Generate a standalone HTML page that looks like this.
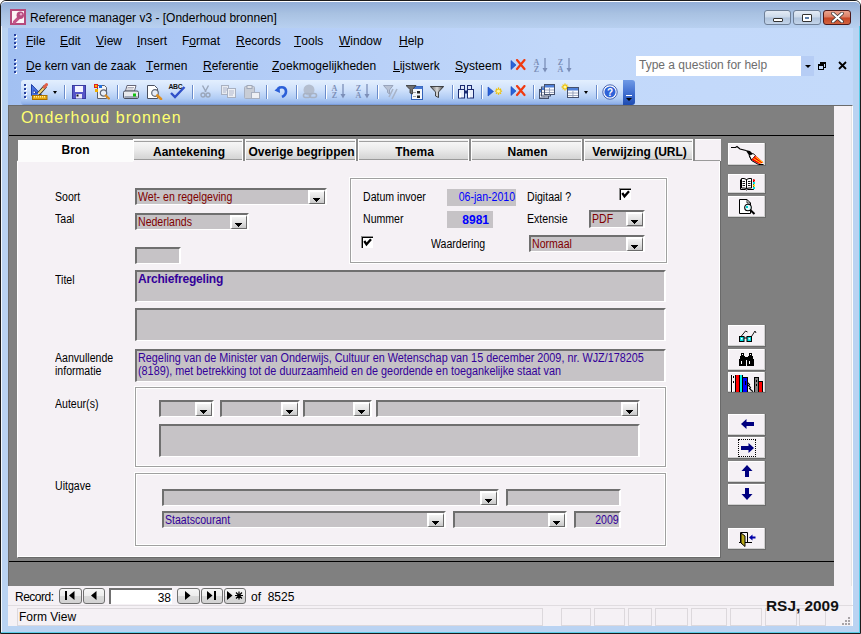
<!DOCTYPE html><html><head><meta charset="utf-8"><style>
*{box-sizing:border-box;margin:0;padding:0}
html,body{width:861px;height:634px;overflow:hidden;background:#fff}
body{position:relative;font-family:"Liberation Sans",sans-serif;font-size:12px;color:#000}
.a{position:absolute}
.nw{white-space:nowrap}
.mn{position:absolute;font-size:12px;white-space:nowrap;line-height:14px}
.mn u{text-decoration:none;position:relative}.mn u:after{content:'';position:absolute;left:0;right:0;top:12px;height:1px;background:#000}
.lb{position:absolute;font-size:12px;white-space:nowrap;line-height:13px;transform:scaleX(0.88);transform-origin:0 0}
.lbr{transform-origin:100% 0}
.tb{position:absolute;background:#C6C3C6;border-top:2px solid #6F6F6F;border-left:2px solid #6F6F6F;border-bottom:1px solid #fff;border-right:2px solid #fff}
.dd{position:absolute;top:0;right:0;width:17px;height:14px;background:linear-gradient(#F4F4F4,#E4E4E4 45%,#C8C8C8);border-top:2px solid #fff;border-left:2px solid #fff;border-right:1px solid #6A6A6A;border-bottom:1px solid #6A6A6A}
.dd i{position:absolute;height:1px;background:#000}
.grp{position:absolute;border:1px solid #A0A0A0;box-shadow:0 0 0 1px #fff, inset 0 0 0 1px #fff}
.btn{position:absolute;background:#F5F1F5;border-right:1px solid #6A6A6A;border-bottom:1px solid #6A6A6A;box-shadow:inset -1px -1px 0 #D0D0D0, inset 1px 1px 0 #fff}
.tab{position:absolute;top:139px;height:22px;background:linear-gradient(#fff 0,#fff 1px,#F0F0F0 1px,#F0F0F0 2px,#A0A0A0 2px,#A0A0A0 3px,#F6F6F6 3px,#ECECEC 45%,#D4D4D4 20px,#9A9A9A 20px,#9A9A9A 21px,#F5F1F5 21px);font-weight:bold;font-size:12px;text-align:center;line-height:14px;padding-top:6px;box-shadow:inset 1px 0 0 #fff, inset -2px 0 0 #8a8a8a, inset -3px 0 0 #fff}
.sep{position:absolute;top:85px;width:2px;height:14px;border-left:1px solid #6A8CCB;border-right:1px solid #fff}
.nb{position:absolute;top:588px;height:16px;border:1px solid #707070;border-radius:3px;background:linear-gradient(#F6F6F6,#EDEDED 50%,#DADADA 50%,#D2D2D2)}
</style></head><body>
<div class="a" style="left:0;top:0;width:861px;height:634px;background:#BAD3F2;border:1px solid #1b1b1b;border-radius:6px 6px 0 0"></div>
<div class="a" style="left:1px;top:1px;width:859px;height:27px;border-top:1px solid #fff;border-radius:5px 5px 0 0;background:linear-gradient(#93AFD8,#A9C2E2 45%,#B8D0F0)"></div>
<svg class="a" style="left:10px;top:9px" width="16" height="16" viewBox="0 0 16 16"><rect x="1" y="1" width="14" height="14" fill="#FDF4F7" stroke="#B54A7C" stroke-width="2"/><path d="M9 8.5 L4.3 13.2" stroke="#C4568A" stroke-width="3.2" stroke-linecap="round"/><circle cx="10.3" cy="6.3" r="3.7" fill="#B84C80"/><circle cx="11" cy="5.3" r="1.2" fill="#E8A8C8"/></svg>
<div class="a nw" style="left:30px;top:11px;font-size:12px;line-height:14px;color:#000">Reference manager v3 - [Onderhoud bronnen]</div>
<div style="position:absolute;top:10px;height:15px;border-radius:3px;left:764px;width:27px;border:1px solid #6E7F97;background:linear-gradient(#E3EBF5,#CBD9EA 48%,#AFC3DC 52%,#C4D5EA)"><div class="a" style="left:8px;top:7px;width:10px;height:4px;background:#fff;border:1px solid #333;border-radius:1px"></div></div>
<div style="position:absolute;top:10px;height:15px;border-radius:3px;left:793px;width:28px;border:1px solid #6E7F97;background:linear-gradient(#E3EBF5,#CBD9EA 48%,#AFC3DC 52%,#C4D5EA)"><div class="a" style="left:8px;top:3px;width:10px;height:8px;background:#fff;border:1px solid #333;border-radius:1px"><div class="a" style="left:2px;top:2px;width:4px;height:2px;background:#5C7DA8"></div></div></div>
<div style="position:absolute;top:10px;height:15px;border-radius:3px;left:823px;width:28px;border:1px solid #4E1A1A;background:linear-gradient(#EBA48F,#DB7D63 48%,#C64424 52%,#D2633F)"><svg class="a" style="left:7px;top:1px" width="13" height="11" viewBox="0 0 13 11"><path d="M2 1.5 L11 9.5 M11 1.5 L2 9.5" stroke="#333" stroke-width="3.6" stroke-linecap="round"/><path d="M2 1.5 L11 9.5 M11 1.5 L2 9.5" stroke="#fff" stroke-width="2.2" stroke-linecap="round"/></svg></div>
<div class="a" style="left:8px;top:28px;width:845px;height:77px;background:linear-gradient(90deg,#A2C0F2 0%,#B5CEF7 35%,#C2D8FA 65%,#C4DAFA 100%)"></div>
<div class="a" style="left:14px;top:34px;width:2px;height:2px;background:#27419E;box-shadow:1px 1px 0 #fff"></div>
<div class="a" style="left:14px;top:38px;width:2px;height:2px;background:#27419E;box-shadow:1px 1px 0 #fff"></div>
<div class="a" style="left:14px;top:42px;width:2px;height:2px;background:#27419E;box-shadow:1px 1px 0 #fff"></div>
<div class="a" style="left:14px;top:46px;width:2px;height:2px;background:#27419E;box-shadow:1px 1px 0 #fff"></div>
<div class="a" style="left:14px;top:59px;width:2px;height:2px;background:#27419E;box-shadow:1px 1px 0 #fff"></div>
<div class="a" style="left:14px;top:63px;width:2px;height:2px;background:#27419E;box-shadow:1px 1px 0 #fff"></div>
<div class="a" style="left:14px;top:67px;width:2px;height:2px;background:#27419E;box-shadow:1px 1px 0 #fff"></div>
<div class="a" style="left:14px;top:71px;width:2px;height:2px;background:#27419E;box-shadow:1px 1px 0 #fff"></div>
<div class="mn" style="left:26px;top:34px"><u>F</u>ile</div>
<div class="mn" style="left:60px;top:34px"><u>E</u>dit</div>
<div class="mn" style="left:96px;top:34px"><u>V</u>iew</div>
<div class="mn" style="left:137px;top:34px"><u>I</u>nsert</div>
<div class="mn" style="left:182px;top:34px">F<u>o</u>rmat</div>
<div class="mn" style="left:236px;top:34px"><u>R</u>ecords</div>
<div class="mn" style="left:294px;top:34px"><u>T</u>ools</div>
<div class="mn" style="left:339px;top:34px"><u>W</u>indow</div>
<div class="mn" style="left:399px;top:34px"><u>H</u>elp</div>
<div class="mn" style="left:26px;top:59px"><u>D</u>e kern van de zaak</div>
<div class="mn" style="left:146px;top:59px"><u>T</u>ermen</div>
<div class="mn" style="left:203px;top:59px"><u>R</u>eferentie</div>
<div class="mn" style="left:272px;top:59px"><u>Z</u>oekmogelijkheden</div>
<div class="mn" style="left:393px;top:59px"><u>L</u>ijstwerk</div>
<div class="mn" style="left:455px;top:59px"><u>S</u>ysteem</div>
<div class="a" style="left:636px;top:56px;width:178px;height:20px;background:#fff"></div>
<div class="a" style="left:801px;top:56px;width:13px;height:20px;background:#B6CDF5"></div>
<div class="a" style="left:805px;top:65px;border-left:3px solid transparent;border-right:3px solid transparent;border-top:3px solid #000"></div>
<div class="a nw" style="left:639px;top:58px;font-size:12px;line-height:14px;color:#6D6D6D">Type a question for help</div>
<div class="a" style="left:820px;top:62px;width:6px;height:6px;border:1px solid #000;border-top-width:2px"></div>
<div class="a" style="left:818px;top:64px;width:6px;height:6px;border:1px solid #000;border-top-width:2px;background:#C4DAFA"></div>
<svg class="a" style="left:838px;top:61px" width="9" height="9" viewBox="0 0 9 9"><path d="M1 1 L8 8 M8 1 L1 8" stroke="#000" stroke-width="1.8"/></svg>
<div class="a" style="left:21px;top:80px;width:603px;height:25px;border-radius:3px 0 0 3px;background:linear-gradient(#E3EFFE,#CFE1FB 40%,#AFCBF4 75%,#8FB0E8 95%,#6F91D2)"></div>
<div class="a" style="left:623px;top:80px;width:12px;height:25px;border-radius:0 3px 3px 0;background:linear-gradient(#6F9AE6,#3A68CC 60%,#1F4CB0)"></div>
<div class="a" style="left:626px;top:95px;width:6px;height:1px;background:#fff"></div>
<div class="a" style="left:626px;top:98px;border-left:3px solid transparent;border-right:3px solid transparent;border-top:3px solid #000"></div>
<div class="a" style="left:24px;top:84px;width:2px;height:2px;background:#27419E;box-shadow:1px 1px 0 #fff"></div>
<div class="a" style="left:24px;top:88px;width:2px;height:2px;background:#27419E;box-shadow:1px 1px 0 #fff"></div>
<div class="a" style="left:24px;top:92px;width:2px;height:2px;background:#27419E;box-shadow:1px 1px 0 #fff"></div>
<div class="a" style="left:24px;top:96px;width:2px;height:2px;background:#27419E;box-shadow:1px 1px 0 #fff"></div>
<svg class="a" style="left:30px;top:83px" width="18" height="17" viewBox="0 0 18 17"><path d="M1.5 1.5 L1.5 12.5 L12 12.5Z" fill="#4A74E0" stroke="#1F3FA8" stroke-width="1"/><path d="M3.5 6.5 L3.5 10.5 L7.5 10.5Z" fill="#1A38A0"/><rect x="3.6" y="8.6" width="1.4" height="1.4" fill="#fff"/><path d="M8.5 11 L15.5 3" stroke="#222" stroke-width="3.6" stroke-linecap="butt"/><path d="M8.7 10.6 L15.3 3.4" stroke="#F2D070" stroke-width="2.2"/><path d="M14.2 4.2 L16.6 1.6" stroke="#E0604A" stroke-width="3" stroke-linecap="round"/><path d="M7.6 12 L9.3 10.6 L8.4 9.8Z" fill="#fff"/><rect x="2.5" y="12.5" width="14.5" height="4" fill="#E8A810" stroke="#A87000" stroke-width="1"/><path d="M4.5 13v1.5M6.5 13v1.5M8.5 13v1.5M10.5 13v1.5M12.5 13v1.5M14.5 13v1.5" stroke="#FFF0A0" stroke-width="1"/></svg>
<div class="a" style="left:53px;top:91px;border-left:2.5px solid transparent;border-right:2.5px solid transparent;border-top:3px solid #000"></div>
<svg class="a" style="left:72px;top:85px" width="14" height="14" viewBox="0 0 14 14"><rect x="0" y="0" width="14" height="14" rx="1" fill="#5656C8"/><rect x="0.5" y="0.5" width="13" height="13" fill="none" stroke="#3A3AA0"/><rect x="3" y="1" width="8" height="6" fill="#F4F4FF"/><rect x="4" y="9" width="6" height="4.5" fill="#E8E8F8"/><rect x="4.5" y="9.5" width="2" height="2" fill="#111"/></svg>
<svg class="a" style="left:93px;top:83px" width="17" height="17" viewBox="0 0 17 17"><path d="M4.5 2.5 H11.5 L13.5 4.5 V15.5 H4.5Z" fill="#F4F4F4" stroke="#5A6070"/><rect x="1" y="1" width="4" height="4" fill="#E02020"/><rect x="2" y="2" width="2" height="2" fill="#F0C000"/><rect x="6" y="2" width="3" height="3" fill="#2070E0"/><rect x="2" y="6" width="3" height="3" fill="#F0B000"/><circle cx="10.5" cy="10" r="3.2" fill="#E8EEF8" stroke="#606878" stroke-width="1.2"/><path d="M12.8 12.5 L15.8 15.5" stroke="#D88A20" stroke-width="2.4" stroke-linecap="round"/></svg>
<svg class="a" style="left:123px;top:85px" width="16" height="15" viewBox="0 0 16 15"><path d="M4 0.5 H13 L11.5 6 H2.5Z" fill="#fff" stroke="#667" stroke-width="1"/><path d="M4.5 2.5H11M4 4H10.5" stroke="#99A" stroke-width="0.8"/><rect x="0.5" y="6" width="15" height="7.5" rx="1.5" fill="#E8EAEE" stroke="#4A5060"/><rect x="1.5" y="11" width="13" height="2" fill="#A0A8B8"/><rect x="10" y="8.5" width="3" height="3" fill="#10C010"/></svg>
<svg class="a" style="left:147px;top:85px" width="16" height="15" viewBox="0 0 16 15"><path d="M0.5 0.5 H7.5 L10.5 3.5 V13.5 H0.5Z" fill="#fff" stroke="#4A5060"/><circle cx="8" cy="8" r="3.3" fill="#E8EEF8" stroke="#606878" stroke-width="1.2"/><path d="M10.3 10.5 L14 14" stroke="#E09020" stroke-width="2.6" stroke-linecap="round"/></svg>
<svg class="a" style="left:168px;top:83px" width="18" height="16" viewBox="0 0 18 16"><text x="0.5" y="6" font-family="Liberation Sans" font-size="6.8" font-weight="bold" fill="#111" letter-spacing="-0.3">ABC</text><path d="M3 10 L7 14 L16.5 4" stroke="#3050C8" stroke-width="2.4" fill="none"/></svg>
<svg class="a" style="left:200px;top:85px" width="11" height="13" viewBox="0 0 11 13"><path d="M2.5 0.5 L6 7 M8.5 0.5 L5 7" stroke="#9AA6BA" stroke-width="1.4"/><circle cx="3" cy="10" r="2" fill="none" stroke="#9AA6BA" stroke-width="1.4"/><circle cx="8" cy="10" r="2" fill="none" stroke="#9AA6BA" stroke-width="1.4"/></svg>
<svg class="a" style="left:221px;top:85px" width="15" height="13" viewBox="0 0 15 13"><rect x="0.5" y="0.5" width="7" height="9" fill="#E8EBF0" stroke="#A8B0C0"/><rect x="6.5" y="3.5" width="8" height="9" fill="#EEF0F4" stroke="#A8B0C0"/><path d="M2 3H6M2 5H6M2 7H5M8 6H13M8 8H13M8 10H12" stroke="#A8B0C8" stroke-width="0.9"/></svg>
<svg class="a" style="left:244px;top:85px" width="16" height="14" viewBox="0 0 16 14"><rect x="0.5" y="1.5" width="10" height="12" rx="1" fill="#C8CDD6" stroke="#A8B0C0"/><rect x="3" y="0.5" width="5" height="3" fill="#E4E6EA" stroke="#A0A8B8"/><rect x="7.5" y="7.5" width="8" height="6" fill="#EEF0F4" stroke="#A8B0C0"/></svg>
<svg class="a" style="left:274px;top:85px" width="14" height="13" viewBox="0 0 14 13"><path d="M4 3.5 C8 1 12 2.5 12 6.5 C12 9.5 10 11 8 12" stroke="#2B5FD8" stroke-width="2.6" fill="none"/><path d="M0.5 5.5 L5.5 1 L6 8Z" fill="#2B5FD8"/></svg>
<svg class="a" style="left:302px;top:84px" width="16" height="15" viewBox="0 0 16 15"><circle cx="7" cy="6" r="5.5" fill="#B4BECF"/><rect x="1.5" y="9.5" width="7" height="4" rx="2" fill="none" stroke="#A8B2C4" stroke-width="1.6"/><rect x="7.5" y="9.5" width="7" height="4" rx="2" fill="none" stroke="#A8B2C4" stroke-width="1.6"/></svg>
<svg class="a" style="left:331px;top:84px" width="15" height="15" viewBox="0 0 15 15"><text x="3.5" y="6.5" text-anchor="middle" font-family="Liberation Serif" font-size="8" font-weight="bold" fill="#7C8FB8">A</text><text x="3.5" y="14" text-anchor="middle" font-family="Liberation Serif" font-size="8" font-weight="bold" fill="#7C8FB8">Z</text><path d="M12 0 V13" stroke="#7C8FB8" stroke-width="1.3"/><path d="M9.5 10 L12 14.5 L14.5 10Z" fill="#7C8FB8"/></svg>
<svg class="a" style="left:355px;top:84px" width="15" height="15" viewBox="0 0 15 15"><text x="3.5" y="6.5" text-anchor="middle" font-family="Liberation Serif" font-size="8" font-weight="bold" fill="#7C8FB8">Z</text><text x="3.5" y="14" text-anchor="middle" font-family="Liberation Serif" font-size="8" font-weight="bold" fill="#7C8FB8">A</text><path d="M12 0 V13" stroke="#7C8FB8" stroke-width="1.3"/><path d="M9.5 10 L12 14.5 L14.5 10Z" fill="#7C8FB8"/></svg>
<svg class="a" style="left:383px;top:85px" width="16" height="15" viewBox="0 0 16 15"><path d="M0.5 0.5 H10 L6.5 5 V9 L4.5 7.5 V5Z" fill="#B8C2D4" stroke="#98A4BC"/><path d="M10 4 L6 12 M14 4 L9 14" stroke="#A8B4C8" stroke-width="1.6"/></svg>
<svg class="a" style="left:406px;top:85px" width="17" height="15" viewBox="0 0 17 15"><rect x="5.5" y="1.5" width="11" height="13" fill="#F4F6FA" stroke="#3060B8"/><rect x="5.5" y="1.5" width="11" height="2.5" fill="#4878D0"/><rect x="11" y="6" width="3" height="2.5" fill="#222"/><rect x="11" y="10.5" width="3" height="2.5" fill="#222"/><path d="M7 7.5H10M7 11.5H10" stroke="#999" stroke-width="0.9"/><path d="M0 0.5 H10 L6.5 4.5 V9 L4 8 V4.5Z" fill="#707070" stroke="#333" stroke-width="0.8"/></svg>
<svg class="a" style="left:430px;top:86px" width="14" height="12" viewBox="0 0 14 12"><defs><linearGradient id="fg" x1="0" x2="1"><stop offset="0" stop-color="#555"/><stop offset="0.5" stop-color="#D8D8D8"/><stop offset="1" stop-color="#444"/></linearGradient></defs><path d="M0.3 0.5 H13.7 L8.5 6 V11.5 L5.5 10 V6Z" fill="url(#fg)" stroke="#222" stroke-width="0.8"/></svg>
<svg class="a" style="left:458px;top:85px" width="16" height="14" viewBox="0 0 16 14"><rect x="2.5" y="0.5" width="4" height="4" fill="#DDE6F8" stroke="#1A2A70"/><rect x="9.5" y="0.5" width="4" height="4" fill="#DDE6F8" stroke="#1A2A70"/><rect x="0.5" y="4.5" width="6" height="8.5" fill="#E8EEFA" stroke="#1A2A70"/><rect x="9.5" y="4.5" width="6" height="8.5" fill="#E8EEFA" stroke="#1A2A70"/><rect x="6" y="5.5" width="4" height="3" fill="#1A2A70"/><rect x="1" y="8" width="2" height="4.5" fill="#fff"/><rect x="10" y="8" width="2" height="4.5" fill="#fff"/></svg>
<svg class="a" style="left:487px;top:86px" width="16" height="11" viewBox="0 0 16 11"><path d="M1 1 L6.5 5.5 L1 10Z" fill="#2A62D8" stroke="#1A48B8" stroke-width="0.6"/><path d="M7.9 5.2H15.1M11.5 1.6V8.8M8.98 2.68L14.02 7.720000000000001M14.02 2.68L8.98 7.720000000000001" stroke="#F0C000" stroke-width="1.3"/><circle cx="11.5" cy="5.2" r="1.62" fill="#FFF6A0"/></svg>
<svg class="a" style="left:510px;top:85px" width="16" height="12" viewBox="0 0 16 12"><path d="M1 1.5 L6 6 L1 10.5Z" fill="#2A62D8" stroke="#1A48B8" stroke-width="0.6"/><path d="M7 1 L14.5 10 M14.5 1 L7 10" stroke="#F03A10" stroke-width="2.2" stroke-linecap="round"/></svg>
<svg class="a" style="left:539px;top:84px" width="16" height="16" viewBox="0 0 16 16"><rect x="0.5" y="5.5" width="9" height="9" fill="#FAFBFD" stroke="#44506C"/><rect x="1" y="6" width="8" height="2.5" fill="#4F80D8"/><path d="M1 11H9M1 13.5H9M5.05 9V14" stroke="#8894B0" stroke-width="0.8"/><rect x="2.5" y="3.0" width="9" height="9" fill="#FAFBFD" stroke="#44506C"/><rect x="3" y="3.5" width="8" height="2.5" fill="#4F80D8"/><path d="M3 8.5H11M3 11.0H11M7.05 6.5V11.5" stroke="#8894B0" stroke-width="0.8"/><rect x="5.5" y="0.5" width="10" height="10" fill="#FAFBFD" stroke="#44506C"/><rect x="6" y="1" width="9" height="2.5" fill="#4F80D8"/><path d="M6 6H15M6 8.5H15M10.5 4V10" stroke="#8894B0" stroke-width="0.8"/></svg>
<svg class="a" style="left:561px;top:83px" width="18" height="15" viewBox="0 0 18 15"><path d="M0.6000000000000001 4H7.4M4 0.6000000000000001V7.4M1.62 1.62L6.38 6.38M6.38 1.62L1.62 6.38" stroke="#F0C000" stroke-width="1.3"/><circle cx="4" cy="4" r="1.53" fill="#FFF6A0"/><rect x="6.5" y="4.5" width="11" height="10" fill="#FAFBFD" stroke="#44506C"/><rect x="7" y="5" width="10" height="2.5" fill="#4F80D8"/><path d="M7 10H17M7 12.5H17M11.95 8V14" stroke="#8894B0" stroke-width="0.8"/></svg>
<div class="a" style="left:584px;top:91px;border-left:2.5px solid transparent;border-right:2.5px solid transparent;border-top:3px solid #000"></div>
<svg class="a" style="left:602px;top:84px" width="16" height="16" viewBox="0 0 16 16"><circle cx="8" cy="8" r="7.2" fill="#fff" stroke="#2040A0" stroke-width="0.8"/><circle cx="8" cy="8" r="5.6" fill="#2F62D8"/><text x="8" y="11.8" text-anchor="middle" font-family="Liberation Sans" font-size="10" font-weight="bold" fill="#fff">?</text></svg>
<svg class="a" style="left:510px;top:59px" width="16" height="12" viewBox="0 0 16 12"><path d="M1 1.5 L6 6 L1 10.5Z" fill="#2A62D8" stroke="#1A48B8" stroke-width="0.6"/><path d="M7 1 L14.5 10 M14.5 1 L7 10" stroke="#F03A10" stroke-width="2.2" stroke-linecap="round"/></svg>
<svg class="a" style="left:533px;top:58px" width="15" height="15" viewBox="0 0 15 15"><text x="3.5" y="6.5" text-anchor="middle" font-family="Liberation Serif" font-size="8" font-weight="bold" fill="#7C8FB8">A</text><text x="3.5" y="14" text-anchor="middle" font-family="Liberation Serif" font-size="8" font-weight="bold" fill="#7C8FB8">Z</text><path d="M12 0 V13" stroke="#7C8FB8" stroke-width="1.3"/><path d="M9.5 10 L12 14.5 L14.5 10Z" fill="#7C8FB8"/></svg>
<svg class="a" style="left:557px;top:58px" width="15" height="15" viewBox="0 0 15 15"><text x="3.5" y="6.5" text-anchor="middle" font-family="Liberation Serif" font-size="8" font-weight="bold" fill="#7C8FB8">Z</text><text x="3.5" y="14" text-anchor="middle" font-family="Liberation Serif" font-size="8" font-weight="bold" fill="#7C8FB8">A</text><path d="M12 0 V13" stroke="#7C8FB8" stroke-width="1.3"/><path d="M9.5 10 L12 14.5 L14.5 10Z" fill="#7C8FB8"/></svg>
<div class="sep" style="left:64px"></div>
<div class="sep" style="left:117px"></div>
<div class="sep" style="left:192px"></div>
<div class="sep" style="left:266px"></div>
<div class="sep" style="left:296px"></div>
<div class="sep" style="left:325px"></div>
<div class="sep" style="left:377px"></div>
<div class="sep" style="left:452px"></div>
<div class="sep" style="left:481px"></div>
<div class="sep" style="left:533px"></div>
<div class="sep" style="left:596px"></div>
<div class="a" style="left:8px;top:105px;width:845px;height:481px;background:#808080;border-top:1px solid #6B6B6B;border-left:1px solid #6B6B6B;border-right:1px solid #fff"></div>
<div class="a" style="left:834px;top:106px;width:18px;height:480px;background:#F5F1F5;border-right:1px solid #E4E2E4"></div>
<div class="a nw" style="left:21px;top:109px;font-size:16px;letter-spacing:1.02px;line-height:18px;color:#FFFF70">Onderhoud bronnen</div>
<div class="a" style="left:9px;top:135px;width:825px;height:1px;background:#000"></div>
<div class="a" style="left:9px;top:561px;width:825px;height:1px;background:#000"></div>
<div class="a" style="left:133px;top:139px;width:588px;height:22px;background:#F5F1F5;border-top:1px solid #fff"></div>
<div class="a" style="left:17px;top:160px;width:703px;height:1px;background:#9A9A9A"></div>
<div class="a" style="left:17px;top:161px;width:704px;height:397px;border-left:1px solid #fff;background:#F5F1F5;border-right:1px solid #6A6A6A;border-bottom:1px solid #6A6A6A;box-shadow:inset -1px -1px 0 #fff"></div>
<div class="a" style="left:18px;top:140px;width:115px;height:22px;background:#FCFCFC;font-weight:bold;font-size:12px;text-align:center;line-height:14px;padding-top:3px">Bron</div>
<div class="tab" style="left:133px;width:112px">Aantekening</div>
<div class="tab" style="left:245px;width:113px">Overige begrippen</div>
<div class="tab" style="left:358px;width:113px">Thema</div>
<div class="tab" style="left:471px;width:113px">Namen</div>
<div class="tab" style="left:584px;width:111px">Verwijzing (URL)</div>
<div class="lb" style="left:55px;top:191px;">Soort</div>
<div class="lb" style="left:55px;top:213px;">Taal</div>
<div class="lb" style="left:55px;top:274px;">Titel</div>
<div class="lb" style="left:55px;top:352px;line-height:12.5px">Aanvullende<br>informatie</div>
<div class="lb" style="left:55px;top:398px;">Auteur(s)</div>
<div class="lb" style="left:55px;top:480px;">Uitgave</div>
<div class="tb" style="left:135px;top:188px;width:192px;height:17px"><div class="lb" style="left:1px;top:1px;color:#800000">Wet- en regelgeving</div><div class="dd"><i style="left:3px;top:6px;width:7px"></i><i style="left:4px;top:7px;width:5px"></i><i style="left:5px;top:8px;width:3px"></i><i style="left:6px;top:9px;width:1px"></i></div></div>
<div class="tb" style="left:135px;top:213px;width:114px;height:17px"><div class="lb" style="left:1px;top:1px;color:#800000">Nederlands</div><div class="dd"><i style="left:3px;top:6px;width:7px"></i><i style="left:4px;top:7px;width:5px"></i><i style="left:5px;top:8px;width:3px"></i><i style="left:6px;top:9px;width:1px"></i></div></div>
<div class="tb" style="left:135px;top:247px;width:46px;height:17px"></div>
<div class="grp" style="left:350px;top:178px;width:317px;height:85px"></div>
<div class="lb" style="left:363px;top:191px;">Datum invoer</div>
<div class="lb" style="left:363px;top:213px;">Nummer</div>
<div class="lb" style="left:431px;top:238px;">Waardering</div>
<div class="lb" style="left:527px;top:191px;">Digitaal ?</div>
<div class="lb" style="left:527px;top:213px;">Extensie</div>
<div class="a" style="left:447px;top:189px;width:69px;height:17px;background:#C6C3C6"></div>
<div class="lb lbr" style="right:346px;top:191px;color:#0000FF">06-jan-2010</div>
<div class="a" style="left:447px;top:211px;width:46px;height:17px;background:#C6C3C6"></div>
<div class="a nw" style="left:447px;top:213px;width:42px;text-align:right;color:#0000FF;font-weight:bold;font-size:12px;line-height:14px">8981</div>
<div class="a" style="left:619px;top:188px;width:12px;height:12px;background:#fff;border-top:1px solid #8C8C8C;border-left:1px solid #8C8C8C;box-shadow:inset 1px 1px 0 #000"></div>
<svg class="a" style="left:619px;top:188px" width="12" height="12" viewBox="0 0 12 12"><path d="M3.3 5 L5.5 8.3 L10 3.3" stroke="#000" stroke-width="2.3" fill="none"/></svg>
<div class="a" style="left:361px;top:236px;width:12px;height:12px;background:#fff;border-top:1px solid #8C8C8C;border-left:1px solid #8C8C8C;box-shadow:inset 1px 1px 0 #000"></div>
<svg class="a" style="left:361px;top:236px" width="12" height="12" viewBox="0 0 12 12"><path d="M3.3 5 L5.5 8.3 L10 3.3" stroke="#000" stroke-width="2.3" fill="none"/></svg>
<div class="tb" style="left:589px;top:210px;width:56px;height:18px"><div class="lb" style="left:1px;top:1px;color:#800000">PDF</div><div class="dd"><i style="left:3px;top:6px;width:7px"></i><i style="left:4px;top:7px;width:5px"></i><i style="left:5px;top:8px;width:3px"></i><i style="left:6px;top:9px;width:1px"></i></div></div>
<div class="tb" style="left:529px;top:235px;width:116px;height:17px"><div class="lb" style="left:1px;top:1px;color:#800000">Normaal</div><div class="dd"><i style="left:3px;top:6px;width:7px"></i><i style="left:4px;top:7px;width:5px"></i><i style="left:5px;top:8px;width:3px"></i><i style="left:6px;top:9px;width:1px"></i></div></div>
<div class="tb" style="left:135px;top:270px;width:531px;height:32px"><div class="a nw" style="left:1px;top:0px;font-weight:bold;font-size:12px;line-height:14px;color:#330099;letter-spacing:-0.2px">Archiefregeling</div></div>
<div class="tb" style="left:135px;top:308px;width:531px;height:33px"></div>
<div class="tb" style="left:135px;top:349px;width:531px;height:33px"><div class="lb" style="left:1px;top:1px;color:#330099;line-height:12.5px;transform:scaleX(0.902)">Regeling van de Minister van Onderwijs, Cultuur en Wetenschap van 15 december 2009, nr. WJZ/178205<br>(8189), met betrekking tot de duurzaamheid en de geordende en toegankelijke staat van</div></div>
<div class="grp" style="left:135px;top:387px;width:531px;height:80px"></div>
<div class="tb" style="left:159px;top:400px;width:55px;height:17px"><div class="dd"><i style="left:3px;top:6px;width:7px"></i><i style="left:4px;top:7px;width:5px"></i><i style="left:5px;top:8px;width:3px"></i><i style="left:6px;top:9px;width:1px"></i></div></div>
<div class="tb" style="left:220px;top:400px;width:80px;height:17px"><div class="dd"><i style="left:3px;top:6px;width:7px"></i><i style="left:4px;top:7px;width:5px"></i><i style="left:5px;top:8px;width:3px"></i><i style="left:6px;top:9px;width:1px"></i></div></div>
<div class="tb" style="left:303px;top:400px;width:69px;height:17px"><div class="dd"><i style="left:3px;top:6px;width:7px"></i><i style="left:4px;top:7px;width:5px"></i><i style="left:5px;top:8px;width:3px"></i><i style="left:6px;top:9px;width:1px"></i></div></div>
<div class="tb" style="left:376px;top:400px;width:264px;height:17px"><div class="dd"><i style="left:3px;top:6px;width:7px"></i><i style="left:4px;top:7px;width:5px"></i><i style="left:5px;top:8px;width:3px"></i><i style="left:6px;top:9px;width:1px"></i></div></div>
<div class="tb" style="left:159px;top:424px;width:481px;height:33px"></div>
<div class="grp" style="left:135px;top:473px;width:531px;height:73px"></div>
<div class="tb" style="left:162px;top:489px;width:337px;height:17px"><div class="dd"><i style="left:3px;top:6px;width:7px"></i><i style="left:4px;top:7px;width:5px"></i><i style="left:5px;top:8px;width:3px"></i><i style="left:6px;top:9px;width:1px"></i></div></div>
<div class="tb" style="left:506px;top:489px;width:115px;height:17px"></div>
<div class="tb" style="left:162px;top:511px;width:284px;height:17px"><div class="lb" style="left:1px;top:1px;color:#330099">Staatscourant</div><div class="dd"><i style="left:3px;top:6px;width:7px"></i><i style="left:4px;top:7px;width:5px"></i><i style="left:5px;top:8px;width:3px"></i><i style="left:6px;top:9px;width:1px"></i></div></div>
<div class="tb" style="left:453px;top:511px;width:114px;height:17px"><div class="dd"><i style="left:3px;top:6px;width:7px"></i><i style="left:4px;top:7px;width:5px"></i><i style="left:5px;top:8px;width:3px"></i><i style="left:6px;top:9px;width:1px"></i></div></div>
<div class="tb" style="left:574px;top:511px;width:47px;height:17px"><div class="lb lbr" style="right:0px;top:1px;color:#330099">2009</div></div>
<div class="btn" style="left:728px;top:143px;width:38px;height:23px"></div>
<div class="btn" style="left:728px;top:174px;width:38px;height:20px"></div>
<div class="btn" style="left:728px;top:196px;width:38px;height:22px"></div>
<div class="btn" style="left:728px;top:325px;width:38px;height:22px"></div>
<div class="btn" style="left:728px;top:349px;width:38px;height:22px"></div>
<div class="btn" style="left:728px;top:372px;width:38px;height:21px"></div>
<div class="btn" style="left:728px;top:414px;width:38px;height:22px"></div>
<div class="btn" style="left:728px;top:437px;width:38px;height:22px"></div>
<div class="btn" style="left:728px;top:461px;width:38px;height:22px"></div>
<div class="btn" style="left:728px;top:484px;width:38px;height:22px"></div>
<div class="btn" style="left:728px;top:528px;width:38px;height:22px"></div>
<svg class="a" style="left:730px;top:145px" width="34" height="20" viewBox="0 0 34 20"><path d="M1 2.5 H5.5 L7 1.5 L10 4 L14 5 L16 5.5" stroke="#000" stroke-width="1.2" fill="none"/><path d="M15.5 5 L20 6 L23 9 L19.5 11Z" fill="#000"/><path d="M19 10.5 L23 8.5 L25.5 10.5 L21.5 15Z" fill="#fff" stroke="#000" stroke-width="0.9"/><path d="M21.5 15 L25.5 10.5 L33.5 17.5 L29 19Z" fill="#FF0000"/><path d="M23.5 13.5 L31 18.3 M25.3 11.8 L33 17.6" stroke="#FFE000" stroke-width="1"/><path d="M19.5 11 L21.5 15.5 L28.5 19.5 H33.5" stroke="#000" stroke-width="1" fill="none"/></svg>
<svg class="a" style="left:739px;top:178px" width="16" height="13" viewBox="0 0 16 13"><path d="M1.5 1.5 V11.5 H6.5 L7.5 12 L8.5 11.5 H14.5 V1.5" stroke="#000" fill="none"/><path d="M2.5 0.5 H5 L7.5 1.5 V10.5 L5 10 H2.5Z M12.5 0.5 H10 L7.5 1.5 V10.5 L10 10 H12.5Z" fill="#fff" stroke="#000"/><path d="M3.5 3.5H6M3.5 5.5H6M3.5 7.5H6M9 3.5H11.5M9 5.5H11.5M9 7.5H11.5" stroke="#000" stroke-width="0.9"/><rect x="14" y="1.5" width="2" height="2" fill="#FF0000"/><rect x="14" y="4" width="2" height="2" fill="#00E0E0"/><rect x="14" y="6.5" width="2" height="2" fill="#FFE000"/><rect x="14" y="9" width="2" height="2" fill="#00E0E0"/></svg>
<svg class="a" style="left:739px;top:199px" width="17" height="16" viewBox="0 0 17 16"><path d="M0.5 0.5 H8 L11.5 4 V14.5 H0.5Z" fill="#fff" stroke="#000"/><path d="M8 0.5 V4 H11.5" stroke="#000" fill="none" stroke-width="0.8"/><circle cx="9" cy="8.5" r="3.3" fill="#E0FFFF" stroke="#000" stroke-width="1.1"/><rect x="7" y="7" width="2" height="2" fill="#00D0D0"/><path d="M11.3 11 L15.5 15" stroke="#000" stroke-width="2"/></svg>
<svg class="a" style="left:738px;top:330px" width="19" height="13" viewBox="0 0 19 13"><rect x="1.5" y="6.5" width="4.5" height="5" fill="#00E0E0" stroke="#000"/><rect x="9" y="6.5" width="4.5" height="5" fill="#00E0E0" stroke="#000"/><path d="M6 8 H9" stroke="#000"/><path d="M3 6.5 L7.5 1 L9.5 2M13.5 6.5 L17 1 L18 3" stroke="#000" fill="none" stroke-width="0.9"/><rect x="3" y="8" width="1.5" height="1.5" fill="#fff"/><rect x="10.5" y="8" width="1.5" height="1.5" fill="#fff"/></svg>
<svg class="a" style="left:739px;top:353px" width="16" height="13" viewBox="0 0 16 13" shape-rendering="crispEdges"><rect x="2" y="0" width="3" height="3" fill="#000"/><rect x="10" y="0" width="3" height="3" fill="#000"/><rect x="1" y="3" width="5" height="3" fill="#000"/><rect x="9" y="3" width="5" height="3" fill="#000"/><rect x="6" y="4" width="3" height="3" fill="#000"/><rect x="0" y="6" width="7" height="7" fill="#000"/><rect x="8" y="6" width="7" height="7" fill="#000"/><rect x="2" y="8" width="1" height="3" fill="#fff"/><rect x="10" y="8" width="1" height="3" fill="#fff"/><rect x="3" y="1" width="1" height="1" fill="#fff"/><rect x="11" y="1" width="1" height="1" fill="#fff"/></svg>
<svg class="a" style="left:731px;top:375px" width="33" height="17" viewBox="0 0 33 17" shape-rendering="crispEdges"><rect x="0" y="0" width="1" height="17" fill="#000"/><rect x="1" y="0" width="1" height="17" fill="#fff"/><rect x="2" y="1" width="1" height="2" fill="#000"/><rect x="2" y="6" width="1" height="2" fill="#000"/><rect x="4" y="0" width="4" height="17" fill="#000"/><rect x="5" y="0" width="3" height="17" fill="#FF0000"/><rect x="8" y="0" width="1" height="17" fill="#000"/><rect x="9" y="0" width="2" height="17" fill="#00E8E8"/><rect x="11" y="0" width="1" height="17" fill="#000"/><rect x="12" y="2" width="5" height="15" fill="#000"/><rect x="12" y="3" width="4" height="14" fill="#0000FF"/><rect x="14" y="6" width="1" height="4" fill="#000"/><path d="M16.5 7.5 L18.5 9.5 L17.5 10.5 L19.5 12.5 L18.5 13.5 L20.5 15.5 L22 16.5" stroke="#000" stroke-width="1.1" fill="none" shape-rendering="auto"/><rect x="23" y="2" width="5" height="15" fill="#000"/><rect x="24" y="3" width="3" height="14" fill="#808080"/><rect x="25" y="5" width="1" height="2" fill="#000"/><rect x="25" y="9" width="1" height="2" fill="#000"/><rect x="28" y="6" width="4" height="11" fill="#000"/><rect x="28" y="7" width="3" height="10" fill="#FF0000"/></svg>
<svg class="a" style="left:741px;top:419px" width="13" height="10" viewBox="0 0 13 10" shape-rendering="crispEdges"><rect x="5" y="3" width="8" height="4" fill="#000080"/><path d="M0 5 L5.5 0 V10Z" fill="#000080" shape-rendering="auto"/></svg>
<svg class="a" style="left:741px;top:443px" width="13" height="10" viewBox="0 0 13 10" shape-rendering="crispEdges"><rect x="0" y="3" width="8" height="4" fill="#000080"/><path d="M13 5 L7.5 0 V10Z" fill="#000080" shape-rendering="auto"/></svg>
<div class="a" style="left:738px;top:439px;width:18px;height:18px;border:1px dotted #000"></div>
<svg class="a" style="left:741px;top:465px" width="12" height="12" viewBox="0 0 12 12" shape-rendering="crispEdges"><rect x="4" y="5" width="4" height="7" fill="#000080"/><path d="M6 0 L0.5 6 H11.5Z" fill="#000080" shape-rendering="auto"/></svg>
<svg class="a" style="left:741px;top:488px" width="12" height="12" viewBox="0 0 12 12" shape-rendering="crispEdges"><rect x="4" y="0" width="4" height="7" fill="#000080"/><path d="M6 12 L0.5 6 H11.5Z" fill="#000080" shape-rendering="auto"/></svg>
<svg class="a" style="left:739px;top:531px" width="18" height="17" viewBox="0 0 18 17"><path d="M1.5 11.5 V1.5 H8.5 V11.5" stroke="#000" fill="none"/><path d="M0 11.5 H13" stroke="#000"/><path d="M2 2 L6 5 V15.5 L2 12Z" fill="#B8A818" stroke="#000" stroke-width="1"/><path d="M10 6.5 L13.5 3.5 V5.5 H16.5 V7.5 H13.5 V9.5Z" fill="#0000A8"/></svg>
<div class="a" style="left:8px;top:586px;width:845px;height:40px;background:#F5F1F5;border-right:1px solid #fff"></div>
<div class="a nw" style="left:15px;top:590px;font-size:12px;letter-spacing:-0.5px;line-height:14px">Record:</div>
<div class="nb" style="left:59px;width:23px"></div>
<div class="nb" style="left:83px;width:22px"></div>
<div class="nb" style="left:177px;width:23px"></div>
<div class="nb" style="left:201px;width:22px"></div>
<div class="nb" style="left:224px;width:22px"></div>
<div class="a" style="left:65px;top:591px;width:2px;height:9px;background:#000"></div>
<svg class="a" style="left:69px;top:591px" width="6" height="9" viewBox="0 0 6 9"><polygon points="5.5,0 0,4.5 5.5,9" fill="#000"/></svg>
<svg class="a" style="left:91px;top:591px" width="6" height="9" viewBox="0 0 6 9"><polygon points="5.5,0 0,4.5 5.5,9" fill="#000"/></svg>
<svg class="a" style="left:185px;top:591px" width="6" height="9" viewBox="0 0 6 9"><polygon points="0,0 5.5,4.5 0,9" fill="#000"/></svg>
<svg class="a" style="left:207px;top:591px" width="6" height="9" viewBox="0 0 6 9"><polygon points="0,0 5.5,4.5 0,9" fill="#000"/></svg>
<div class="a" style="left:214px;top:591px;width:2px;height:9px;background:#000"></div>
<svg class="a" style="left:227px;top:591px" width="6" height="9" viewBox="0 0 6 9"><polygon points="0,0 5.5,4.5 0,9" fill="#000"/></svg>
<svg class="a" style="left:234px;top:591px" width="10" height="9" viewBox="0 0 10 9"><path d="M5 0.5V8.5M1 4.5H9M2 1.5L8 7.5M8 1.5L2 7.5" stroke="#000" stroke-width="1.2"/></svg>
<div class="a" style="left:109px;top:588px;width:63px;height:16px;background:#fff;border-top:2px solid #707070;border-left:2px solid #707070"></div>
<div class="a nw" style="left:109px;top:591px;width:62px;text-align:right;font-size:12px;line-height:14px">38</div>
<div class="a nw" style="left:251px;top:590px;font-size:12px;line-height:14px">of&nbsp;&nbsp;8525</div>
<div class="a" style="left:8px;top:605px;width:845px;height:1px;background:#E0DCE0"></div>
<div class="a" style="left:17px;top:608px;width:526px;height:18px;border:1px solid #DCD8DC"></div>
<div class="a" style="left:561px;top:608px;width:30px;height:18px;border:1px solid #DCD8DC"></div>
<div class="a" style="left:594px;top:608px;width:31px;height:18px;border:1px solid #DCD8DC"></div>
<div class="a" style="left:628px;top:608px;width:24px;height:18px;border:1px solid #DCD8DC"></div>
<div class="a" style="left:655px;top:608px;width:33px;height:18px;border:1px solid #DCD8DC"></div>
<div class="a" style="left:691px;top:608px;width:36px;height:18px;border:1px solid #DCD8DC"></div>
<div class="a" style="left:730px;top:608px;width:32px;height:18px;border:1px solid #DCD8DC"></div>
<div class="a" style="left:765px;top:608px;width:32px;height:18px;border:1px solid #DCD8DC"></div>
<div class="a" style="left:799px;top:608px;width:27px;height:18px;border:1px solid #DCD8DC"></div>
<div class="a nw" style="left:19px;top:610px;font-size:12px;line-height:14px">Form View</div>
<div class="a nw" style="left:766px;top:597px;font-size:15.4px;font-weight:bold;line-height:17px;color:#111">RSJ, 2009</div>
<div class="a" style="left:848px;top:617px;width:2px;height:2px;background:#A8A4A8"></div>
<div class="a" style="left:845px;top:620px;width:2px;height:2px;background:#A8A4A8"></div>
<div class="a" style="left:848px;top:620px;width:2px;height:2px;background:#A8A4A8"></div>
<div class="a" style="left:842px;top:623px;width:2px;height:2px;background:#A8A4A8"></div>
<div class="a" style="left:845px;top:623px;width:2px;height:2px;background:#A8A4A8"></div>
<div class="a" style="left:848px;top:623px;width:2px;height:2px;background:#A8A4A8"></div>
<div class="a" style="left:859px;top:26px;width:1px;height:607px;background:#5ACCE8"></div>
<div class="a" style="left:1px;top:632px;width:859px;height:1px;background:#5ACCE8"></div>
<div class="a" style="left:1px;top:26px;width:1px;height:606px;background:#F4F8FC"></div>
</body></html>
